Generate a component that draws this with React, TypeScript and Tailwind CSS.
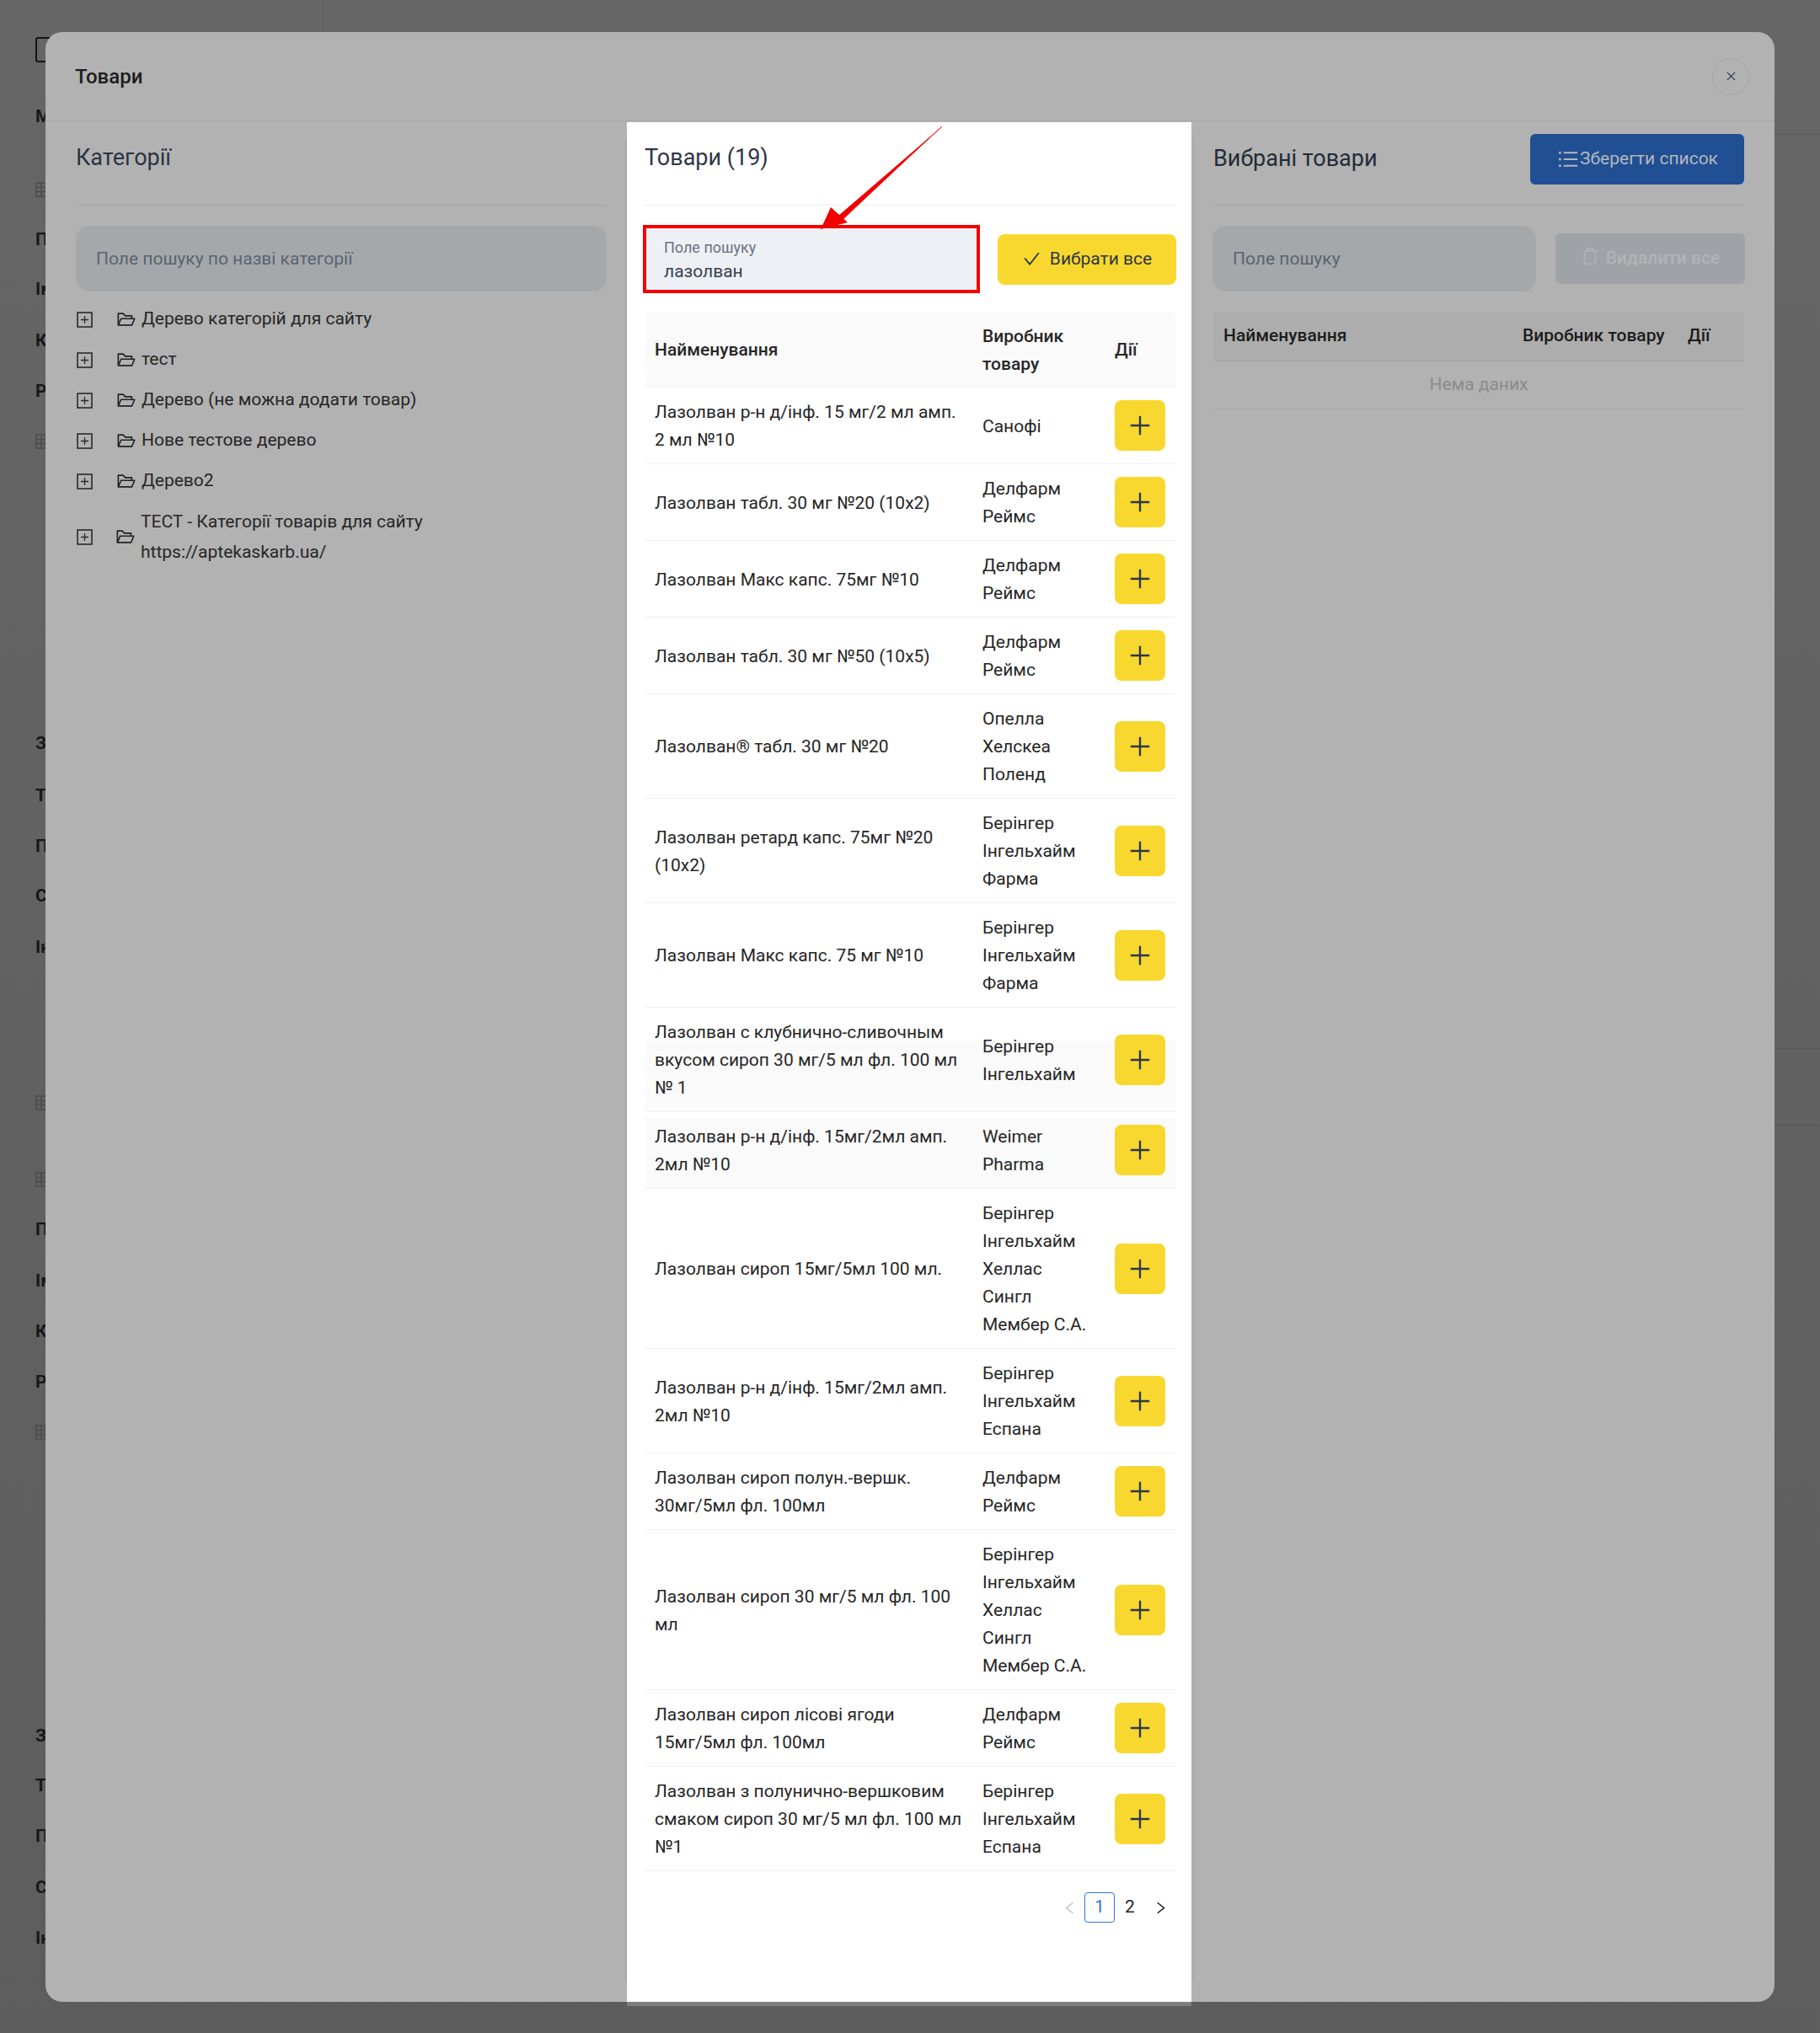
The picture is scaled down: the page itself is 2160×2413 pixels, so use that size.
import React from "react";
import {
  AiOutlineCheck,
  AiOutlineClose,
  AiOutlineFolderOpen,
  AiOutlineLeft,
  AiOutlinePlus,
  AiOutlineRight,
  AiOutlineUnorderedList,
} from "react-icons/ai";

const BI = "Берінгер\nІнгельхайм";
const DR = "Делфарм\nРеймс";
const BIF = BI + "\nФарма";
const BIE = BI + "\nЕспана";
const BIH = BI + "\nХеллас\nСингл\nМембер С.А.";

type Row = { name: string; maker: string; bg?: string };

const rows: Row[] = [
  { name: "Лазолван р-н д/інф. 15 мг/2 мл амп.\n2 мл №10", maker: "Санофі" },
  { name: "Лазолван табл. 30 мг №20 (10х2)", maker: DR },
  { name: "Лазолван Макс капс. 75мг №10", maker: DR },
  { name: "Лазолван табл. 30 мг №50 (10х5)", maker: DR },
  { name: "Лазолван® табл. 30 мг №20", maker: "Опелла\nХелскеа\nПоленд" },
  { name: "Лазолван ретард капс. 75мг №20\n(10х2)", maker: BIF },
  { name: "Лазолван Макс капс. 75 мг №10", maker: BIF },
  {
    name: "Лазолван с клубнично-сливочным\nвкусом сироп 30 мг/5 мл фл. 100 мл\n№ 1",
    maker: BI,
    bg: "bg-[linear-gradient(to_bottom,#ffffff_39px,#fafafa_39px)]",
  },
  {
    name: "Лазолван р-н д/інф. 15мг/2мл амп.\n2мл №10",
    maker: "Weimer\nPharma",
    bg: "bg-[linear-gradient(to_bottom,#ffffff_6px,#fafafa_6px)]",
  },
  { name: "Лазолван сироп 15мг/5мл 100 мл.", maker: BIH },
  { name: "Лазолван р-н д/інф. 15мг/2мл амп.\n2мл №10", maker: BIE },
  { name: "Лазолван сироп полун.-вершк.\n30мг/5мл фл. 100мл", maker: DR },
  { name: "Лазолван сироп 30 мг/5 мл фл. 100\nмл", maker: BIH },
  { name: "Лазолван сироп лісові ягоди\n15мг/5мл фл. 100мл", maker: DR },
  {
    name: "Лазолван з полунично-вершковим\nсмаком сироп 30 мг/5 мл фл. 100 мл\n№1",
    maker: BIE,
  },
];

const tree = [
  "Дерево категорій для сайту",
  "тест",
  "Дерево (не можна додати товар)",
  "Нове тестове дерево",
  "Дерево2",
];

function GridGlyph({ list = false }: { list?: boolean }) {
  return (
    <svg width="18" height="18" viewBox="0 0 18 18" fill="none" stroke="#4b4b4e" strokeWidth="1.5">
      <rect x="1" y="1" width="16" height="16" />
      <path d="M1 6.5h16M1 11.5h16M7 1v16" />
      {list ? <path d="M12 1v16" /> : null}
    </svg>
  );
}

function PlusBox() {
  return (
    <svg width="19" height="19" viewBox="0 0 19 19" fill="none" stroke="#2a2a2a" className="shrink-0">
      <rect x="1" y="1" width="17" height="17" strokeWidth="1.6" />
      <path d="M5 9.5h9M9.5 5v9" strokeWidth="1.3" />
    </svg>
  );
}

function Sidebar() {
  const letter = "h-[24px] text-[21px] leading-[24px] font-bold text-[#17171a] whitespace-nowrap";
  return (
    <div className="w-[384px] h-full border-r border-[#5a5a5a] pl-[42px] overflow-hidden">
      <div className="mt-[44px] w-[30px] h-[30px] border-2 border-[#141416] rounded-[3px]" />
      <div className={`mt-[52px] ${letter}`}>М</div>
      <div className="mt-[66px]"><GridGlyph /></div>
      <div className={`mt-[38px] ${letter}`}>П</div>
      <div className={`mt-[35px] ${letter}`}>Ім</div>
      <div className={`mt-[37px] ${letter}`}>К</div>
      <div className={`mt-[36px] ${letter}`}>Р</div>
      <div className="mt-[39px]"><GridGlyph list /></div>
      <div className={`mt-[337px] ${letter}`}>З</div>
      <div className={`mt-[38px] ${letter}`}>Т</div>
      <div className={`mt-[36px] ${letter}`}>П</div>
      <div className={`mt-[35px] ${letter}`}>С</div>
      <div className={`mt-[37px] ${letter}`}>Ін</div>
      <div className="mt-[164px]"><GridGlyph /></div>
      <div className="mt-[73px]"><GridGlyph /></div>
      <div className={`mt-[38px] ${letter}`}>П</div>
      <div className={`mt-[37px] ${letter}`}>Ім</div>
      <div className={`mt-[36px] ${letter}`}>К</div>
      <div className={`mt-[36px] ${letter}`}>Р</div>
      <div className="mt-[39px]"><GridGlyph list /></div>
      <div className={`mt-[339px] ${letter}`}>З</div>
      <div className={`mt-[35px] ${letter}`}>Т</div>
      <div className={`mt-[36px] ${letter}`}>П</div>
      <div className={`mt-[37px] ${letter}`}>С</div>
      <div className={`mt-[36px] ${letter}`}>Ін</div>
    </div>
  );
}

function CategoriesColumn() {
  return (
    <div className="w-[690px] mt-[21px] mb-[23px] border-r-2 border-[#a5a8ab] pl-[36px] pr-[22px]">
      <div className="h-[79px] pt-[2px] border-b border-[#a8a9a9]">
        <h2 className="text-[27px] leading-[40px] text-[#2a3342]">Категорії</h2>
      </div>
      <input
        readOnly
        placeholder="Поле пошуку по назві категорії"
        className="block mt-[24px] w-full h-[78px] rounded-[16px] bg-[#a4a8ab] px-[24px] text-[21px] outline-none placeholder:text-[#5a6470]"
      />
      <div className="mt-[9px]">
        {tree.map((t) => (
          <div key={t} className="flex items-center h-[48px] pl-[1px] text-[21px] text-[#262626]">
            <PlusBox />
            <AiOutlineFolderOpen size={24} className="ml-[28px] shrink-0 text-[#222222]" />
            <span className="ml-[6px]">{t}</span>
          </div>
        ))}
        <div className="flex items-center h-[84px] pl-[1px] text-[21px] leading-[36px] text-[#262626]">
          <PlusBox />
          <AiOutlineFolderOpen size={24} className="ml-[27px] shrink-0 text-[#222222]" />
          <span className="ml-[6px] whitespace-pre-line">{"ТЕСТ - Категорії товарів для сайту\nhttps://aptekaskarb.ua/"}</span>
        </div>
      </div>
    </div>
  );
}

function ProductRow({ row }: { row: Row }) {
  return (
    <div className={`flex items-center border-b border-[#f0f0f0] py-[12px] text-[21px] leading-[33px] text-[#262626] ${row.bg ?? ""}`}>
      <div className="w-[389px] px-[12px] mt-[1px] -mb-[1px] whitespace-pre">{row.name}</div>
      <div className="w-[157px] px-[12px] mt-[1px] -mb-[1px] whitespace-pre">{row.maker}</div>
      <div className="w-[84px] px-[12px]">
        <button className="flex items-center justify-center w-[60px] h-[60px] rounded-[8px] bg-[#f8d82e] text-[#2d3748]">
          <AiOutlinePlus size={32} />
        </button>
      </div>
    </div>
  );
}

function ProductsColumn() {
  return (
    <div className="relative w-[670px] mt-px bg-white pl-[21px] pr-[19px] pt-[20px]">
      <div className="h-[79px] pt-[2px] border-b border-[#eff0f1]">
        <h2 className="text-[27px] leading-[40px] text-[#2d3748]">Товари (19)</h2>
      </div>
      <div className="flex items-center justify-between mt-[23px] -ml-[2px] -mr-px">
        <div className="flex flex-col w-[400px] h-[81px] border-[4px] border-[#f50000] bg-[#edf0f5] pl-[21px] pt-[11px]">
          <label className="text-[18px] leading-[24px] text-[#6b7280]">Поле пошуку</label>
          <input
            readOnly
            value="лазолван"
            className="mt-[2px] text-[21px] leading-[28px] h-[28px] text-[#374151] bg-transparent outline-none"
          />
        </div>
        <button className="flex items-center justify-center gap-[10px] w-[212px] h-[60px] rounded-[8px] bg-[#f8d82e] text-[21px] text-[#2d3748]">
          <AiOutlineCheck size={23} />
          Вибрати все
        </button>
      </div>
      <div className="mt-[22px]">
        <div className="flex items-center h-[90px] rounded-t-[6px] bg-[#fafafa] border-b border-[#f0f0f0] pt-[2px] text-[21px] leading-[33px] font-medium text-[#262626]">
          <div className="w-[389px] px-[12px]">Найменування</div>
          <div className="w-[157px] px-[12px] whitespace-pre-line">{"Виробник\nтовару"}</div>
          <div className="w-[84px] px-[12px]">Дії</div>
        </div>
        {rows.map((r, i) => (
          <ProductRow key={i} row={r} />
        ))}
      </div>
      <div className="flex justify-end mt-[25px] text-[21px] text-[#262626]">
        <span className="flex items-center justify-center w-[36px] h-[36px] text-[#c4c4c4]"><AiOutlineLeft size={19} /></span>
        <span className="flex items-center justify-center w-[36px] h-[36px] rounded-[4px] border border-[#2f75d6] text-[#2f75d6]">1</span>
        <span className="flex items-center justify-center w-[36px] h-[36px]">2</span>
        <span className="flex items-center justify-center w-[36px] h-[36px]"><AiOutlineRight size={19} /></span>
      </div>
      {/* sliver of the highlight that hangs under the dialog edge */}
      <div className="absolute left-0 right-0 -bottom-[5px] h-[5px] bg-[#7d7e7d]" />
    </div>
  );
}

function SelectedColumn() {
  return (
    <div className="flex-1 ml-[2px] mt-[21px] mb-[23px] border-l border-[#a0a3a7] pl-[23px] pr-[36px]">
      <div className="flex items-start justify-between h-[79px] border-b border-[#a8a9a9]">
        <h2 className="mt-[3px] text-[27px] leading-[40px] text-[#232b38]">Вибрані товари</h2>
        <button className="flex items-center justify-center w-[254px] h-[60px] -mt-[6px] rounded-[6px] bg-[#214f93] text-[21px] text-[#b4b7bc]">
          <AiOutlineUnorderedList size={28} />
          Зберегти список
        </button>
      </div>
      <div className="flex items-center justify-between mt-[24px] -ml-px -mr-px">
        <input
          readOnly
          placeholder="Поле пошуку"
          className="block w-[384px] h-[78px] rounded-[16px] bg-[#a4a8ab] px-[24px] text-[21px] outline-none placeholder:text-[#5a6470]"
        />
        <button className="flex items-center justify-center gap-[10px] w-[225px] h-[60px] pl-[2px] rounded-[6px] bg-[#9fa2a6] text-[21px] font-medium text-[#b1b4b7]">
          <svg width="18" height="20" viewBox="0 0 18 20" fill="none" stroke="#b1b4b7" strokeWidth="1.6" className="-mt-[6px]">
            <path d="M1 4h16M5.5 4V1h7v3M2.5 4v15h13V4" />
          </svg>
          Видалити все
        </button>
      </div>
      <div className="mt-[24px]">
        <div className="flex items-center h-[59px] px-[12px] bg-[#adadad] border-b border-[#a5a5a5] text-[21px] font-medium text-[#1c1c1c]">
          <div className="w-[355px]">Найменування</div>
          <div className="w-[196px]">Виробник товару</div>
          <div>Дії</div>
        </div>
        <div className="flex items-center justify-center h-[57px] border-b border-[#a5a6a6] text-[21px] text-[#8b8c8c]">Нема даних</div>
      </div>
    </div>
  );
}

export default function App() {
  return (
    <div className="relative w-[2160px] h-[2413px] overflow-hidden flex bg-[linear-gradient(to_bottom,#666666,#5c5d5c)] font-['Roboto',sans-serif]">
      <Sidebar />
      <div className="flex-1">
        <div className="h-[160px] border-b border-[#5a5a5a]" />
        <div className="h-[1085px] border-b border-[#555656]" />
        <div className="h-[91px] border-b border-[#555656]" />
      </div>

      <div className="absolute left-[54px] top-[38px] w-[2052px] h-[2338px] rounded-[20px] bg-[#b2b2b2] flex flex-col">
        <div className="flex items-center justify-between h-[106px] shrink-0 border-b border-[#a6a8aa] pl-[35px] pr-[30px]">
          <h1 className="text-[24px] font-medium text-[#1d1d1d]">Товари</h1>
          <button className="flex items-center justify-center w-[44px] h-[44px] rounded-full border border-[#a3a6aa] text-[#2d3748]">
            <AiOutlineClose size={15} />
          </button>
        </div>
        <div className="flex flex-1">
          <CategoriesColumn />
          <ProductsColumn />
          <SelectedColumn />
        </div>
      </div>

      {/* red annotation arrow */}
      <svg className="absolute left-[960px] top-[140px]" width="170" height="140" viewBox="960 140 170 140" fill="none">
        <path d="M1118 150 L995 256 L999 262 Z" fill="#f20000" />
        <path d="M1118 150 L1000 259" stroke="#f20000" strokeWidth="1" />
        <path d="M974 272 L986 246 L1006 264 Z" fill="#f20000" />
      </svg>
    </div>
  );
}
